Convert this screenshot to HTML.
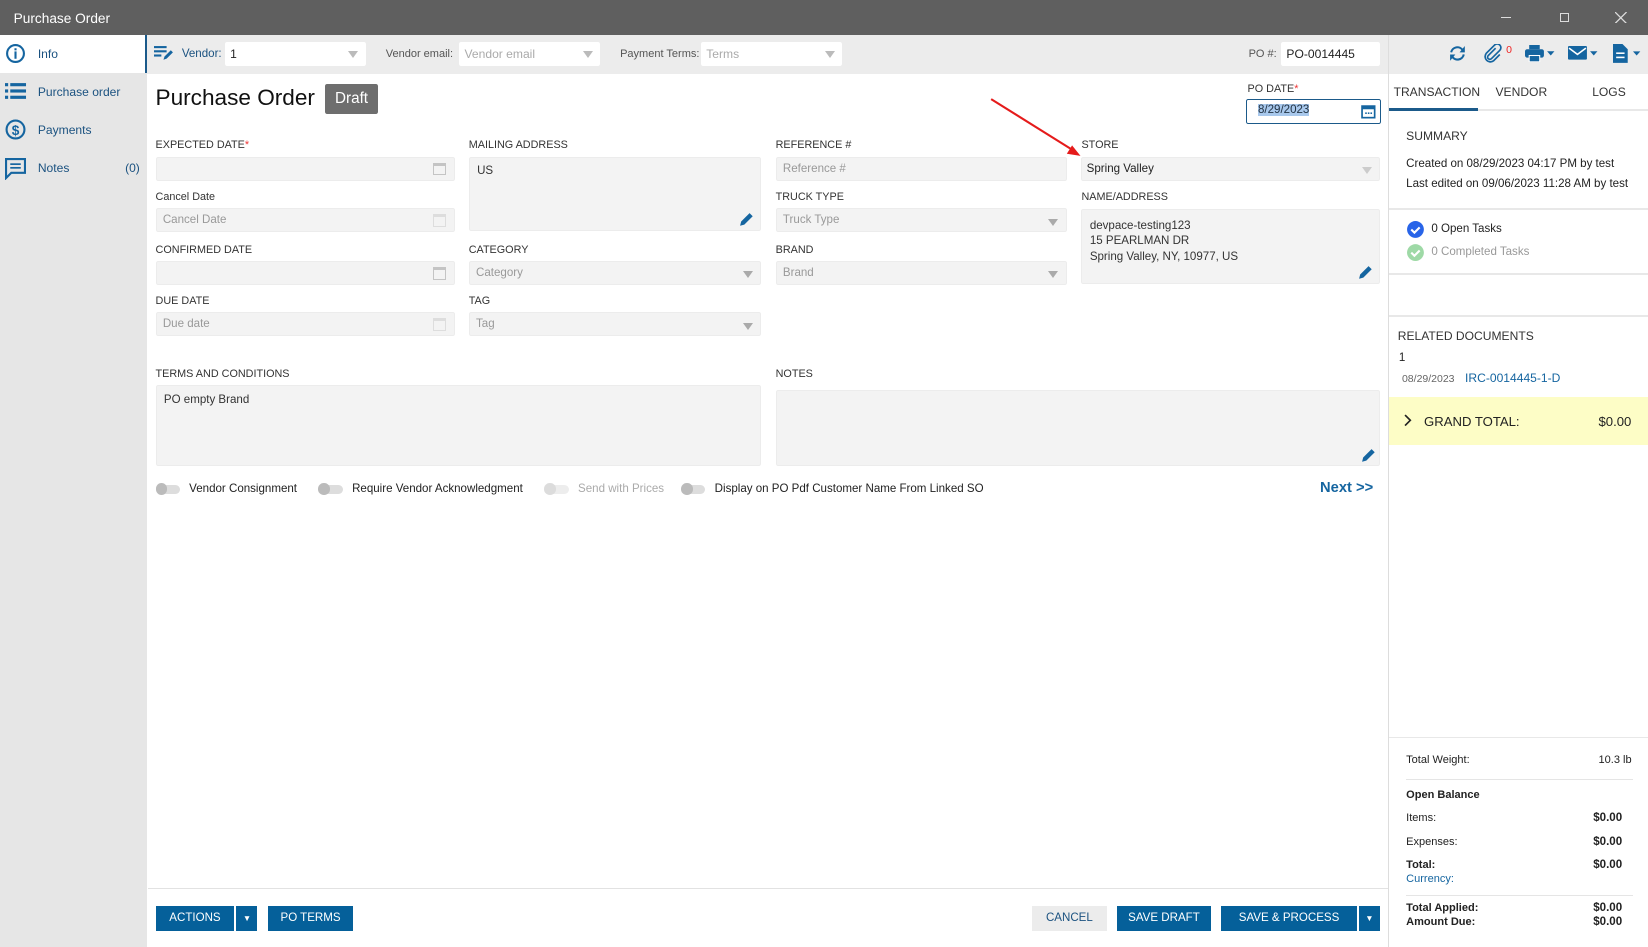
<!DOCTYPE html>
<html><head><meta charset="utf-8">
<style>
*{box-sizing:border-box;margin:0;padding:0}
html,body{width:1648px;height:947px;overflow:hidden;background:#fff}
#w{zoom:1.051;width:1568px;height:901px;position:relative;font-family:"Liberation Sans",sans-serif;font-size:12px;color:#222}
.a{position:absolute}
.title{left:0;top:0;width:1568px;height:33px;background:#5f5f5f;color:#fff;font-size:13px;padding:10px 0 0 13px}
.side{left:0;top:33px;width:140px;height:868px;background:#e6e6e6}
.si{position:absolute;left:0;width:140px;height:36px;color:#1b5280;font-size:11.5px}
.si span{position:absolute;left:36px;top:12px}
.si svg{position:absolute;left:5px;top:8px}
.tb{left:140px;top:33px;width:1428px;height:37px;background:#ececec}
.inp{position:absolute;background:#fff;height:23px;border-radius:2px;font-size:11.5px;padding:5px 5px}
.lbl{position:absolute;font-size:10.3px;color:#333;letter-spacing:0}
.fld{position:absolute;background:#f3f3f3;border:1px solid #ececec;border-radius:2px;height:23px;color:#999;font-size:11px;padding:5px 6px}
.tri{position:absolute;right:7px;top:9px;width:0;height:0;border-left:5px solid transparent;border-right:5px solid transparent;border-top:7px solid #aaa}
.cal{position:absolute;right:8px;top:5px;width:12px;height:12px;border:1px solid #c4c4c4;border-top-width:3px}
.btn{position:absolute;top:862px;height:24px;background:#05609a;color:#fff;font-size:11px;text-align:center;line-height:24px}
.tg{position:absolute;top:461px;width:22px;height:9px;border-radius:5px;background:#ddd}
.tg:before{content:"";position:absolute;left:-1px;top:-1px;width:11px;height:11px;border-radius:50%;background:#bbb}
.tgl{position:absolute;top:460px;font-size:11px}
.rp{left:1321px;top:70px;width:247px;height:831px;border-left:1px solid #ddd;background:#fff}
.hr{position:absolute;left:0;width:247px;height:2px;background:#e8e8e8}
.r{position:absolute;font-size:11px}
.pen{position:absolute}
</style></head><body><div id="w">
<div class="a title">Purchase Order</div>
<div class="a" style="left:1428px;top:16px;width:10px;height:1px;background:#ddd"></div>
<div class="a" style="left:1484px;top:12px;width:9px;height:9px;border:1px solid #ddd"></div>
<svg class="a" style="left:1537px;top:11px" width="11" height="11"><path d="M0 0L11 11M11 0L0 11" stroke="#ddd" stroke-width="1.2"/></svg>

<div class="a side">
 <div class="si" style="top:0;background:#fff;border-right:2px solid #1b5a8a"><svg width="20" height="20"><circle cx="10" cy="10" r="8" fill="none" stroke="#1565a0" stroke-width="2"/><rect x="9" y="8" width="2" height="7" fill="#1565a0"/><rect x="9" y="5" width="2" height="2" fill="#1565a0"/></svg><span>Info</span></div>
 <div class="si" style="top:36px"><svg width="22" height="20"><g fill="#1565a0"><rect x="0" y="2" width="3" height="3"/><rect x="5" y="2" width="15" height="3"/><rect x="0" y="8" width="3" height="3"/><rect x="5" y="8" width="15" height="3"/><rect x="0" y="14" width="3" height="3"/><rect x="5" y="14" width="15" height="3"/></g></svg><span>Purchase order</span></div>
 <div class="si" style="top:72px"><svg width="20" height="20"><circle cx="10" cy="10" r="8.5" fill="none" stroke="#1565a0" stroke-width="2"/><text x="10" y="15" font-size="13" font-weight="bold" text-anchor="middle" fill="#1565a0" font-family="Liberation Sans">$</text></svg><span>Payments</span></div>
 <div class="si" style="top:108px"><svg width="20" height="22"><path d="M1 2h18v13H6l-5 5z" fill="none" stroke="#1565a0" stroke-width="2"/><rect x="5" y="6" width="10" height="1.6" fill="#1565a0"/><rect x="5" y="9.5" width="10" height="1.6" fill="#1565a0"/></svg><span>Notes</span><span style="left:119px">(0)</span></div>
</div>

<div class="a tb"></div>
<svg class="a" style="left:147px;top:43px" width="20" height="16"><g fill="#1565a0"><rect x="0" y="1" width="12" height="2"/><rect x="0" y="5" width="12" height="2"/><rect x="0" y="9" width="7" height="2"/><path d="M9 14l1-3 6-6 2 2-6 6z"/></g></svg>
<div class="a" style="left:173px;top:46px;color:#1b5280;font-size:11px">Vendor:</div>
<div class="inp" style="left:214px;top:40px;width:134px;color:#222">1<div class="tri" style="border-top-color:#bbb"></div></div>
<div class="a" style="left:367px;top:46px;color:#555;font-size:10.5px">Vendor email:</div>
<div class="inp" style="left:437px;top:40px;width:134px;color:#aaa">Vendor email<div class="tri" style="border-top-color:#bbb"></div></div>
<div class="a" style="left:590px;top:46px;color:#555;font-size:10.5px">Payment Terms:</div>
<div class="inp" style="left:667px;top:40px;width:134px;color:#aaa">Terms<div class="tri" style="border-top-color:#bbb"></div></div>
<div class="a" style="left:1188px;top:46px;color:#555;font-size:10.5px">PO #:</div>
<div class="inp" style="left:1219px;top:40px;width:94px;color:#222">PO-0014445</div>

<div class="a" style="left:148px;top:81px;font-size:21.5px;color:#111">Purchase Order</div>
<div class="a" style="left:309px;top:80px;width:51px;height:28px;background:#6e6e6e;color:#fff;font-size:14.5px;text-align:center;line-height:28px;border-radius:2px">Draft</div>

<div class="lbl" style="left:1187px;top:79px">PO DATE<span style="color:#e33">*</span></div>
<div class="a" style="left:1186px;top:94px;width:128px;height:24px;border:1px solid #1b5a8a;border-radius:2px"><span style="position:absolute;left:10px;top:4px;background:#a8c8ec;color:#234;font-size:11px">8/29/2023</span>
<svg style="position:absolute;right:4px;top:4px" width="14" height="14"><rect x="1" y="2" width="12" height="11" fill="none" stroke="#1565a0" stroke-width="1.6"/><rect x="1" y="2" width="12" height="3" fill="#1565a0"/><rect x="4" y="8" width="1.5" height="1.5" fill="#1565a0"/><rect x="6.5" y="8" width="1.5" height="1.5" fill="#1565a0"/><rect x="9" y="8" width="1.5" height="1.5" fill="#1565a0"/></svg></div>

<svg class="a" style="left:940px;top:92px" width="92" height="60"><line x1="3" y1="2" x2="83" y2="52" stroke="#e51b1b" stroke-width="2"/><path d="M88 56l-13-2 5-8z" fill="#e51b1b"/></svg>

<div class="lbl" style="left:148px;top:132px">EXPECTED DATE<span style="color:#e33">*</span></div>
<div class="fld" style="left:148px;top:149px;width:285px"><div class="cal"></div></div>
<div class="lbl" style="left:148px;top:182px">Cancel Date</div>
<div class="fld" style="left:148px;top:198px;width:285px">Cancel Date<div class="cal" style="border-color:#ddd"></div></div>
<div class="lbl" style="left:148px;top:232px">CONFIRMED DATE</div>
<div class="fld" style="left:148px;top:248px;width:285px"><div class="cal"></div></div>
<div class="lbl" style="left:148px;top:281px">DUE DATE</div>
<div class="fld" style="left:148px;top:297px;width:285px">Due date<div class="cal" style="border-color:#ddd"></div></div>

<div class="lbl" style="left:446px;top:132px">MAILING ADDRESS</div>
<div class="fld" style="left:446px;top:149px;width:278px;height:71px;color:#333;padding:7px 7px">US</div>
<div class="lbl" style="left:446px;top:232px">CATEGORY</div>
<div class="fld" style="left:446px;top:248px;width:278px">Category<div class="tri"></div></div>
<div class="lbl" style="left:446px;top:281px">TAG</div>
<div class="fld" style="left:446px;top:297px;width:278px">Tag<div class="tri"></div></div>

<div class="lbl" style="left:738px;top:132px">REFERENCE #</div>
<div class="fld" style="left:738px;top:149px;width:277px">Reference #</div>
<div class="lbl" style="left:738px;top:182px">TRUCK TYPE</div>
<div class="fld" style="left:738px;top:198px;width:277px">Truck Type<div class="tri"></div></div>
<div class="lbl" style="left:738px;top:232px">BRAND</div>
<div class="fld" style="left:738px;top:248px;width:277px">Brand<div class="tri"></div></div>

<div class="lbl" style="left:1029px;top:132px">STORE</div>
<div class="fld" style="left:1029px;top:149px;width:284px;color:#222;padding-left:4px">Spring Valley<div class="tri" style="border-top-color:#ccc"></div></div>
<div class="lbl" style="left:1029px;top:182px">NAME/ADDRESS</div>
<div class="fld" style="left:1029px;top:199px;width:284px;height:71px;color:#333;padding:8px 7px;line-height:15px;font-size:11px">devpace-testing123<br>15 PEARLMAN DR<br>Spring Valley, NY, 10977, US</div>

<div class="lbl" style="left:148px;top:350px">TERMS AND CONDITIONS</div>
<div class="fld" style="left:148px;top:366px;width:576px;height:77px;color:#333;padding:8px 7px">PO empty Brand</div>
<div class="lbl" style="left:738px;top:350px">NOTES</div>
<div class="fld" style="left:738px;top:371px;width:575px;height:72px"></div>

<svg class="pen" style="left:702px;top:201px" width="16" height="16"><path d="M2 14l1-4 8-8 3 3-8 8z" fill="#1565a0"/></svg>
<svg class="pen" style="left:1291px;top:251px" width="16" height="16"><path d="M2 14l1-4 8-8 3 3-8 8z" fill="#1565a0"/></svg>
<svg class="pen" style="left:1294px;top:425px" width="16" height="16"><path d="M2 14l1-4 8-8 3 3-8 8z" fill="#1565a0"/></svg>

<div class="tg" style="left:149px"></div><div class="tgl" style="left:180px">Vendor Consignment</div>
<div class="tg" style="left:304px"></div><div class="tgl" style="left:335px">Require Vendor Acknowledgment</div>
<div class="tg" style="left:519px;opacity:.5"></div><div class="tgl" style="left:550px;color:#aaa">Send with Prices</div>
<div class="tg" style="left:649px"></div><div class="tgl" style="left:680px">Display on PO Pdf Customer Name From Linked SO</div>
<div class="a" style="left:1256px;top:457px;color:#1565a0;font-size:14px;font-weight:bold">Next &gt;&gt;</div>

<div class="a" style="left:141px;top:845px;width:1180px;height:1px;background:#e2e2e2"></div>
<div class="btn" style="left:148px;width:75px">ACTIONS</div>
<div class="btn" style="left:225px;width:20px;font-size:8px">▼</div>
<div class="btn" style="left:255px;width:81px">PO TERMS</div>
<div class="btn" style="left:982px;width:71px;background:#ececec;color:#1b5280">CANCEL</div>
<div class="btn" style="left:1063px;width:89px">SAVE DRAFT</div>
<div class="btn" style="left:1162px;width:129px">SAVE &amp; PROCESS</div>
<div class="btn" style="left:1293px;width:20px;font-size:8px">▼</div>

<div class="a" style="left:1321px;top:33px;width:1px;height:37px;background:#ddd"></div>
<svg class="a" style="left:1378px;top:43px" width="18" height="16"><path d="M3 7a6 6 0 0 1 11-2" fill="none" stroke="#1565a0" stroke-width="2"/><path d="M16 1v6h-5z" fill="#1565a0"/><path d="M15 9a6 6 0 0 1-11 2" fill="none" stroke="#1565a0" stroke-width="2"/><path d="M2 15v-6h5z" fill="#1565a0"/></svg>
<svg class="a" style="left:1411px;top:42px" width="18" height="18"><path d="M12 4l-7 7a2 2 0 0 0 3 3l8-8a3.5 3.5 0 0 0-5-5l-8 8a5 5 0 0 0 7 7l6-6" fill="none" stroke="#1565a0" stroke-width="1.6"/></svg>
<div class="a" style="left:1433px;top:42px;color:#e22;font-size:10px">0</div>
<svg class="a" style="left:1451px;top:43px" width="30" height="16"><rect x="4" y="0" width="10" height="4" fill="#1565a0"/><rect x="0" y="4" width="18" height="8" rx="2" fill="#1565a0"/><rect x="4" y="10" width="10" height="6" fill="#1565a0" stroke="#fff" stroke-width="1"/><path d="M21 6h7l-3.5 4z" fill="#1565a0"/></svg>
<svg class="a" style="left:1492px;top:44px" width="30" height="14"><rect x="0" y="0" width="18" height="13" rx="1" fill="#1565a0"/><path d="M1 2l8 6 8-6" fill="none" stroke="#fff" stroke-width="1.5"/><path d="M21 5h7l-3.5 4z" fill="#1565a0"/></svg>
<svg class="a" style="left:1535px;top:42px" width="30" height="18"><path d="M0 0h9l5 5v13H0z" fill="#1565a0"/><rect x="3" y="8" width="8" height="1.5" fill="#fff"/><rect x="3" y="12" width="8" height="1.5" fill="#fff"/><path d="M19 7h7l-3.5 4z" fill="#1565a0"/></svg>

<div class="a rp">
 <div class="r" style="left:4px;top:11px;font-size:11.5px;color:#333">TRANSACTION</div>
 <div class="r" style="left:101px;top:11px;font-size:11.5px;color:#333">VENDOR</div>
 <div class="r" style="left:193px;top:11px;font-size:11.5px;color:#333">LOGS</div>
 <div class="hr" style="top:34px;height:2px"></div>
 <div class="a" style="left:0;top:33px;width:84px;height:3px;background:#1b5a8a"></div>
 <div class="r" style="left:16px;top:53px;font-size:11.5px;color:#333">SUMMARY</div>
 <div class="r" style="left:16px;top:80px">Created on 08/29/2023 04:17 PM by test</div>
 <div class="r" style="left:16px;top:99px">Last edited on 09/06/2023 11:28 AM by test</div>
 <div class="hr" style="top:128px"></div>
 <svg class="a" style="left:16px;top:139px" width="18" height="40"><circle cx="9" cy="9" r="8" fill="#2864e8"/><path d="M5 9l3 3 5-5" fill="none" stroke="#fff" stroke-width="2"/><circle cx="9" cy="31" r="8" fill="#9ed9a6"/><path d="M5 31l3 3 5-5" fill="none" stroke="#fff" stroke-width="2"/></svg>
 <div class="r" style="left:40px;top:142px">0 Open Tasks</div>
 <div class="r" style="left:40px;top:164px;color:#999">0 Completed Tasks</div>
 <div class="hr" style="top:190px"></div>
 <div class="hr" style="top:230px"></div>
 <div class="r" style="left:8px;top:243px;font-size:11.5px;color:#333">RELATED DOCUMENTS</div>
 <div class="r" style="left:9px;top:265px">1</div>
 <div class="r" style="left:12px;top:285px;font-size:10px;color:#666">08/29/2023</div>
 <div class="r" style="left:72px;top:283px;color:#1565a0;font-size:11.5px">IRC-0014445-1-D</div>
 <div class="a" style="left:0;top:308px;width:247px;height:45px;background:#fdfdc6"></div>
 <svg class="a" style="left:14px;top:324px" width="8" height="12"><path d="M1 1l5 5-5 5" fill="none" stroke="#222" stroke-width="1.6"/></svg>
 <div class="r" style="left:33px;top:324px;font-size:12.5px;color:#222">GRAND TOTAL:</div>
 <div class="r" style="left:199px;top:324px;font-size:12.5px;color:#222">$0.00</div>
 <div class="hr" style="top:631px;height:1px"></div>
 <div class="r" style="left:16px;top:647px;font-size:10.5px">Total Weight:</div>
 <div class="r" style="left:199px;top:647px;font-size:10.5px">10.3 lb</div>
 <div class="a" style="left:16px;top:671px;width:216px;height:1px;background:#e5e5e5"></div>
 <div class="r" style="left:16px;top:681px;font-size:10.5px;font-weight:bold">Open Balance</div>
 <div class="r" style="left:16px;top:703px;font-size:10.5px">Items:</div><div class="r" style="left:194px;top:703px;font-size:11px;font-weight:bold">$0.00</div>
 <div class="r" style="left:16px;top:725px;font-size:10.5px">Expenses:</div><div class="r" style="left:194px;top:725px;font-size:11px;font-weight:bold">$0.00</div>
 <div class="r" style="left:16px;top:747px;font-size:10.5px;font-weight:bold">Total:</div><div class="r" style="left:194px;top:747px;font-size:11px;font-weight:bold">$0.00</div>
 <div class="r" style="left:16px;top:761px;font-size:10.5px;color:#1565a0">Currency:</div>
 <div class="a" style="left:16px;top:782px;width:216px;height:1px;background:#e5e5e5"></div>
 <div class="r" style="left:16px;top:788px;font-size:10.5px;font-weight:bold">Total Applied:</div><div class="r" style="left:194px;top:788px;font-size:11px;font-weight:bold">$0.00</div>
 <div class="r" style="left:16px;top:802px;font-size:10.5px;font-weight:bold">Amount Due:</div><div class="r" style="left:194px;top:802px;font-size:11px;font-weight:bold">$0.00</div>
</div>
</div></body></html>
